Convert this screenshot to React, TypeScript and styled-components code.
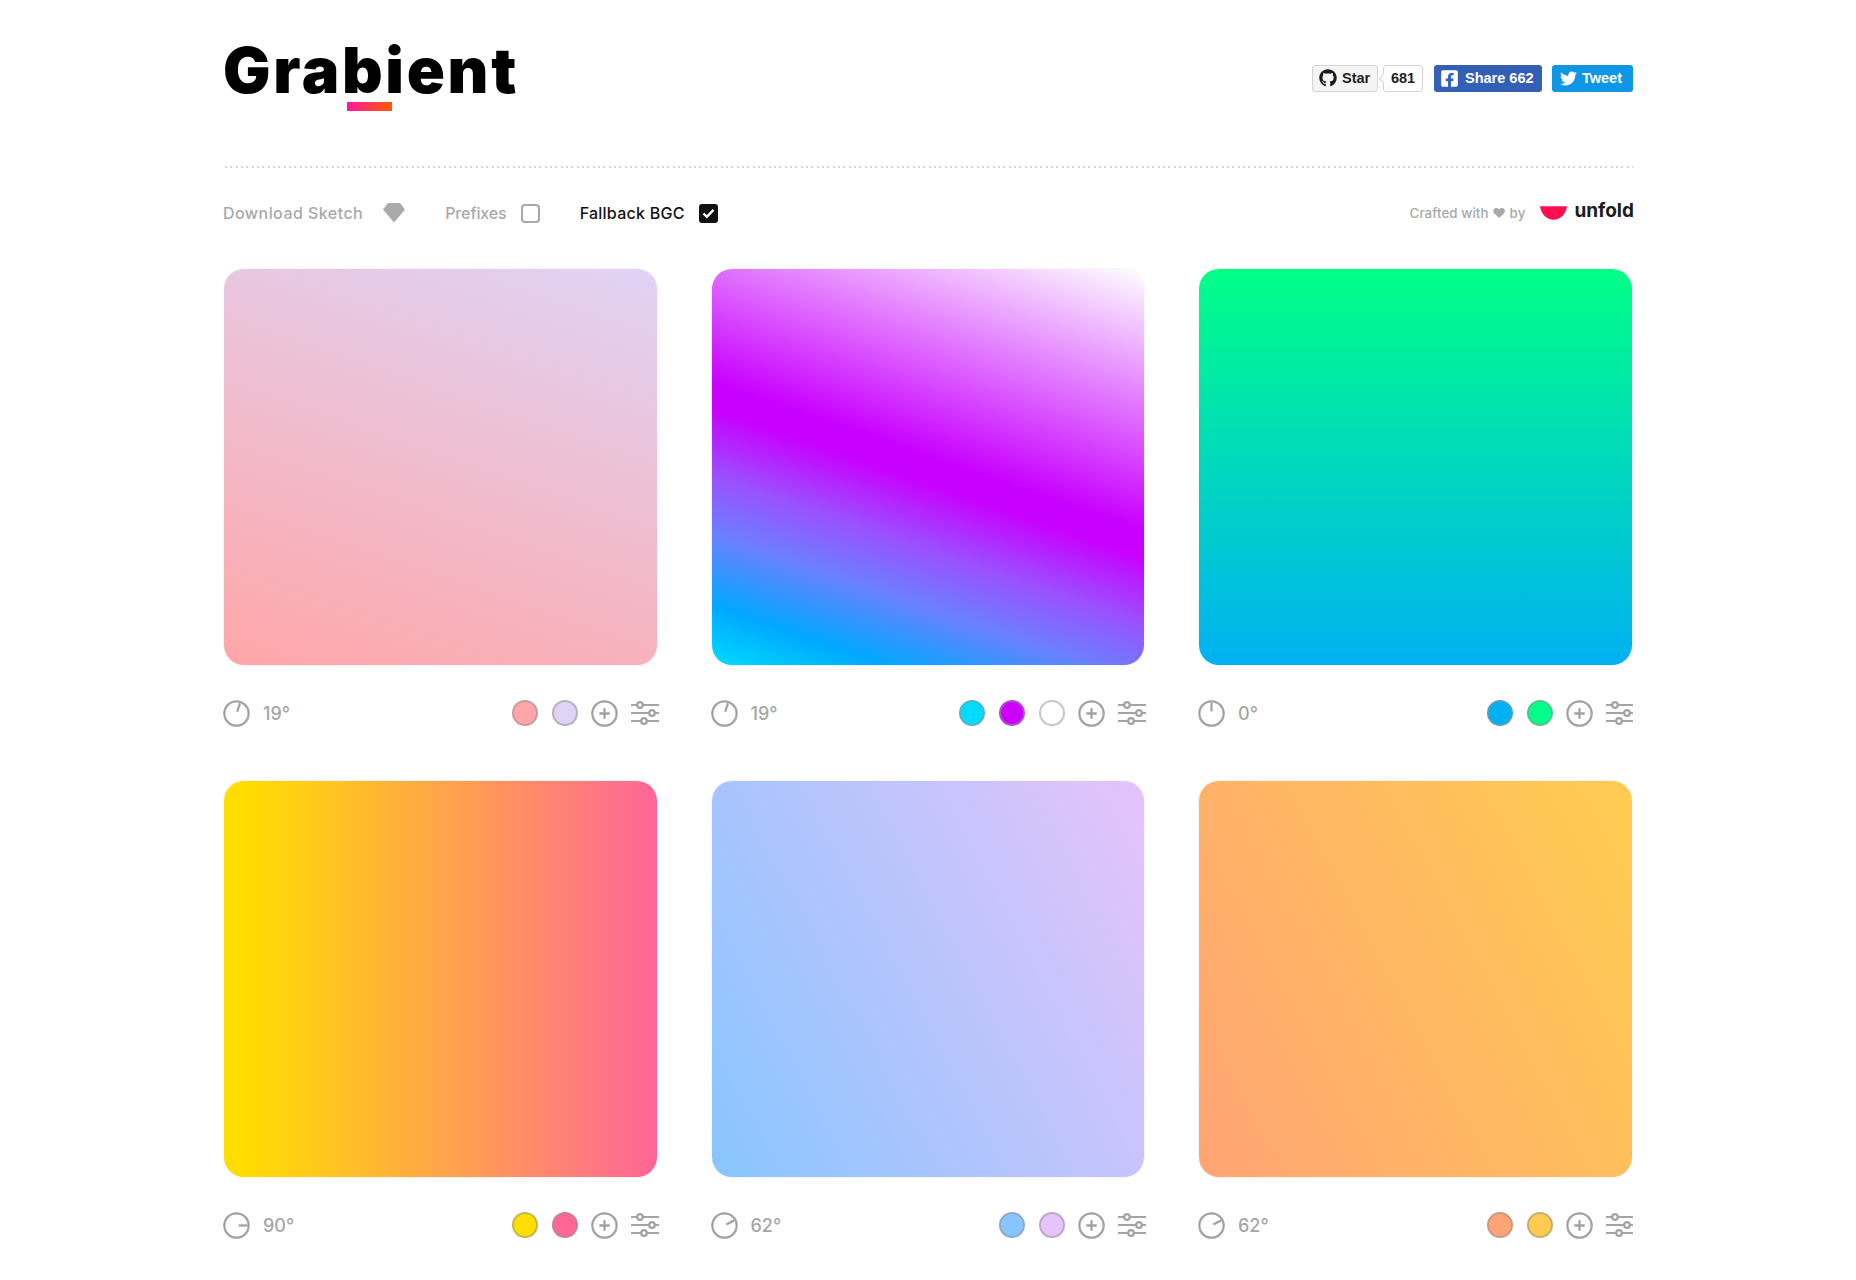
import React from 'react';
import styled, { createGlobalStyle } from 'styled-components';
import { FaFacebookSquare, FaGithub, FaTwitter } from 'react-icons/fa';

const GlobalStyle = createGlobalStyle`
  html, body {
    margin: 0;
    padding: 0;
    background: #fff;
    font-family: "Inter", "Liberation Sans", sans-serif;
  }
`;

interface GradientData {
  angle: number;
  image: string;
  swatches: string[];
}

const gradients: GradientData[] = [
  { angle: 19, image: 'linear-gradient(19deg, #FFA6A8 0%, #E0D3F5 100%)', swatches: ['#FFA6A8', '#E0D3F5'] },
  {
    angle: 19,
    image:
      'linear-gradient(19deg, #00DBFF 0%, #00A8FF 11%, #6A80FF 24%, #9B50FF 35%, #C800FF 47%, #C800FF 52%, #FFFFFF 100%)',
    swatches: ['#00DBFF', '#CC00FF', '#FFFFFF'],
  },
  { angle: 0, image: 'linear-gradient(0deg, #00B1F2 0%, #00FF88 100%)', swatches: ['#00B1F2', '#00FF88'] },
  { angle: 90, image: 'linear-gradient(90deg, #FFDE00 0%, #FFDE00 4%, #FF6698 100%)', swatches: ['#FFDE00', '#FF6698'] },
  { angle: 62, image: 'linear-gradient(62deg, #88C5FF 0%, #E6C3FA 100%)', swatches: ['#88C5FF', '#E6C3FA'] },
  { angle: 62, image: 'linear-gradient(62deg, #FFA474 0%, #FFCC50 100%)', swatches: ['#FFA474', '#FFCC50'] },
];

const DialIcon = ({ angle }: { angle: number }) => {
  const rad = (angle * Math.PI) / 180;
  const x1 = 13 + Math.sin(rad) * 2;
  const y1 = 13 - Math.cos(rad) * 2;
  const x2 = 13 + Math.sin(rad) * 10.5;
  const y2 = 13 - Math.cos(rad) * 10.5;
  return (
    <svg width="27" height="27" viewBox="0 0 26 26" fill="none" stroke="#a3a3a3" strokeWidth="2.2">
      <circle cx="13" cy="13" r="11.7" />
      <line x1={x1} y1={y1} x2={x2} y2={y2} />
    </svg>
  );
};

const PlusIcon = () => (
  <svg width="27" height="27" viewBox="0 0 26 26" fill="none" stroke="#a3a3a3" strokeWidth="2.2">
    <circle cx="13" cy="13" r="11.7" />
    <path d="M13 8v10M8 13h10" />
  </svg>
);

const SlidersIcon = () => (
  <svg width="28" height="26" viewBox="0 0 28 26" fill="none" stroke="#a3a3a3" strokeWidth="2.2">
    <path d="M0 5h6M12 5h16M0 13h18M24 13h4M0 21h10M16 21h12" />
    <circle cx="9" cy="5" r="2.8" />
    <circle cx="21" cy="13" r="2.8" />
    <circle cx="13" cy="21" r="2.8" />
  </svg>
);

const GemIcon = () => (
  <svg width="22" height="20" viewBox="0 0 22 20" fill="#aaa">
    <path d="M5 0h12l5 6.5L11 19.5 0 6.5z" />
  </svg>
);

const CheckedIcon = () => (
  <svg width="19" height="19" viewBox="0 0 19 19">
    <rect width="19" height="19" rx="3" fill="#111" />
    <path d="M4.5 9.5l3.4 3.4 6.6-7" fill="none" stroke="#fff" strokeWidth="2.4" />
  </svg>
);

const UnfoldMark = () => (
  <svg width="27" height="16" viewBox="0 0 28 16">
    <path d="M0 1h28c-1 8-7 14-14 14S1 9 0 1z" fill="#ff0f50" />
  </svg>
);

export default function App() {
  return (
    <>
      <GlobalStyle />
      <Page>
        <Header>
          <Logo>
            Grabient
            <LogoBar />
          </Logo>
          <Social>
            <GithubButton>
              <FaGithub size={18} color="#1a1a1a" />
              Star
            </GithubButton>
            <GithubCount>681</GithubCount>
            <FacebookButton>
              <FaFacebookSquare size={19} />
              <span>Share 662</span>
            </FacebookButton>
            <TwitterButton>
              <FaTwitter size={17} />
              Tweet
            </TwitterButton>
          </Social>
        </Header>
        <Divider />
        <Toolbar>
          <ToolItem $gap={20}>
            <ToolLabel $spacing={0.45}>Download Sketch</ToolLabel>
            <GemIcon />
          </ToolItem>
          <ToolItem $gap={14}>
            <ToolLabel $spacing={-0.1}>Prefixes</ToolLabel>
            <Checkbox />
          </ToolItem>
          <ToolItem $gap={14}>
            <ToolLabel $spacing={0.25} $active>
              Fallback BGC
            </ToolLabel>
            <CheckedIcon />
          </ToolItem>
          <Credit>
            <CreditText>Crafted with ♥ by</CreditText>
            <UnfoldMark />
            <UnfoldName>unfold</UnfoldName>
          </Credit>
        </Toolbar>
        <Grid>
          {gradients.map((g, i) => (
            <Card key={i}>
              <Swatch style={{ backgroundImage: g.image }} />
              <Meta>
                <DialIcon angle={g.angle} />
                <Angle>{g.angle}°</Angle>
                <Colors>
                  {g.swatches.map((c) => (
                    <Dot key={c} style={{ backgroundColor: c }} />
                  ))}
                  <PlusSlot>
                    <PlusIcon />
                  </PlusSlot>
                  <SlidersSlot>
                    <SlidersIcon />
                  </SlidersSlot>
                </Colors>
              </Meta>
            </Card>
          ))}
        </Grid>
      </Page>
    </>
  );
}

const Page = styled.div`
  width: 1410px;
  height: 1280px;
  overflow: hidden;
  margin: 0 auto;
`;

const Header = styled.header`
  display: flex;
  justify-content: space-between;
  height: 166px;
`;

const Logo = styled.h1`
  position: relative;
  margin: 28px 0 0 0;
  height: 84px;
  font-size: 63px;
  line-height: 84px;
  font-weight: 900;
  letter-spacing: 2.7px;
  color: #000;
`;

const LogoBar = styled.span`
  position: absolute;
  left: 124px;
  top: 74px;
  width: 45px;
  height: 9px;
  background: linear-gradient(90deg, #ff1a9e, #ff5a00);
`;

const Social = styled.div`
  display: flex;
  align-items: center;
  height: 28px;
  margin-top: 64px;
`;

const SocialButton = styled.div`
  display: flex;
  align-items: center;
  box-sizing: border-box;
  height: 27px;
  border-radius: 3px;
  font-family: "Liberation Sans", Arial, sans-serif;
  font-size: 14.5px;
  font-weight: 700;
`;

const GithubButton = styled(SocialButton)`
  gap: 5px;
  width: 66px;
  padding-left: 6px;
  color: #222;
  background: #f4f4f4;
  border: 1px solid #d4d4d4;
`;

const GithubCount = styled(SocialButton)`
  position: relative;
  justify-content: center;
  width: 40px;
  margin-left: 5px;
  color: #222;
  background: #fff;
  border: 1px solid #d4d4d4;

  &::before {
    content: '';
    position: absolute;
    left: -4px;
    top: 9px;
    width: 6px;
    height: 6px;
    background: #fff;
    border-left: 1px solid #d4d4d4;
    border-bottom: 1px solid #d4d4d4;
    transform: rotate(45deg);
  }
`;

const FacebookButton = styled(SocialButton)`
  gap: 6px;
  width: 108px;
  margin-left: 11px;
  padding-left: 6px;
  color: #fff;
  background: #3360b5;
`;

const TwitterButton = styled(SocialButton)`
  gap: 5px;
  width: 81px;
  margin-left: 10px;
  padding-left: 8px;
  color: #fff;
  background: #0f97e6;
`;

const Divider = styled.div`
  height: 2px;
  margin-left: 2px;
  background: repeating-linear-gradient(90deg, #d6d6d6 0, #d6d6d6 2px, transparent 2px, transparent 5.33px);
`;

const Toolbar = styled.div`
  display: flex;
  align-items: center;
  height: 26px;
  margin-top: 32px;
`;

const ToolItem = styled.div<{ $gap: number }>`
  display: flex;
  align-items: center;
  gap: ${(p) => p.$gap}px;
  margin-right: 40px;
`;

const ToolLabel = styled.span<{ $active?: boolean; $spacing: number }>`
  font-size: 16px;
  font-weight: 500;
  letter-spacing: ${(p) => p.$spacing}px;
  color: ${(p) => (p.$active ? '#111' : '#a8a8a8')};
`;

const Checkbox = styled.span`
  box-sizing: border-box;
  width: 19px;
  height: 19px;
  border: 2px solid #a8a8a8;
  border-radius: 4px;
`;

const Credit = styled.div`
  display: flex;
  align-items: center;
  margin-left: auto;
  margin-right: -1px;
`;

const CreditText = styled.span`
  margin-right: 15px;
  font-size: 13.3px;
  font-weight: 500;
  letter-spacing: 0.1px;
  color: #a8a8a8;
`;

const UnfoldName = styled.span`
  margin-left: 7px;
  margin-top: -5px;
  font-size: 19px;
  font-weight: 700;
  color: #1c1c1c;
`;

const Grid = styled.main`
  display: grid;
  grid-template-columns: repeat(3, 432.5px);
  column-gap: 55px;
  margin-top: 43px;
  margin-left: 1px;
`;

const Card = styled.article`
  height: 512px;
`;

const Swatch = styled.div`
  height: 396px;
  border-radius: 20px;
  box-shadow: 0 0 2px rgba(0, 0, 0, 0.12);
`;

const Meta = styled.div`
  display: flex;
  align-items: center;
  height: 27px;
  margin-top: 35px;
  margin-left: -1px;
`;

const Angle = styled.span`
  margin-left: 13px;
  font-size: 18px;
  font-weight: 500;
  color: #a6a6a6;
`;

const Colors = styled.div`
  display: flex;
  align-items: center;
  gap: 14px;
  margin: -1px -2px 0 auto;
`;

const Dot = styled.span`
  box-sizing: border-box;
  width: 26px;
  height: 26px;
  border-radius: 50%;
  border: 2px solid rgba(150, 150, 150, 0.55);
`;

const PlusSlot = styled.span`
  display: flex;
  margin-left: -1px;
`;

const SlidersSlot = styled.span`
  display: flex;
  margin-left: -1px;
`;
